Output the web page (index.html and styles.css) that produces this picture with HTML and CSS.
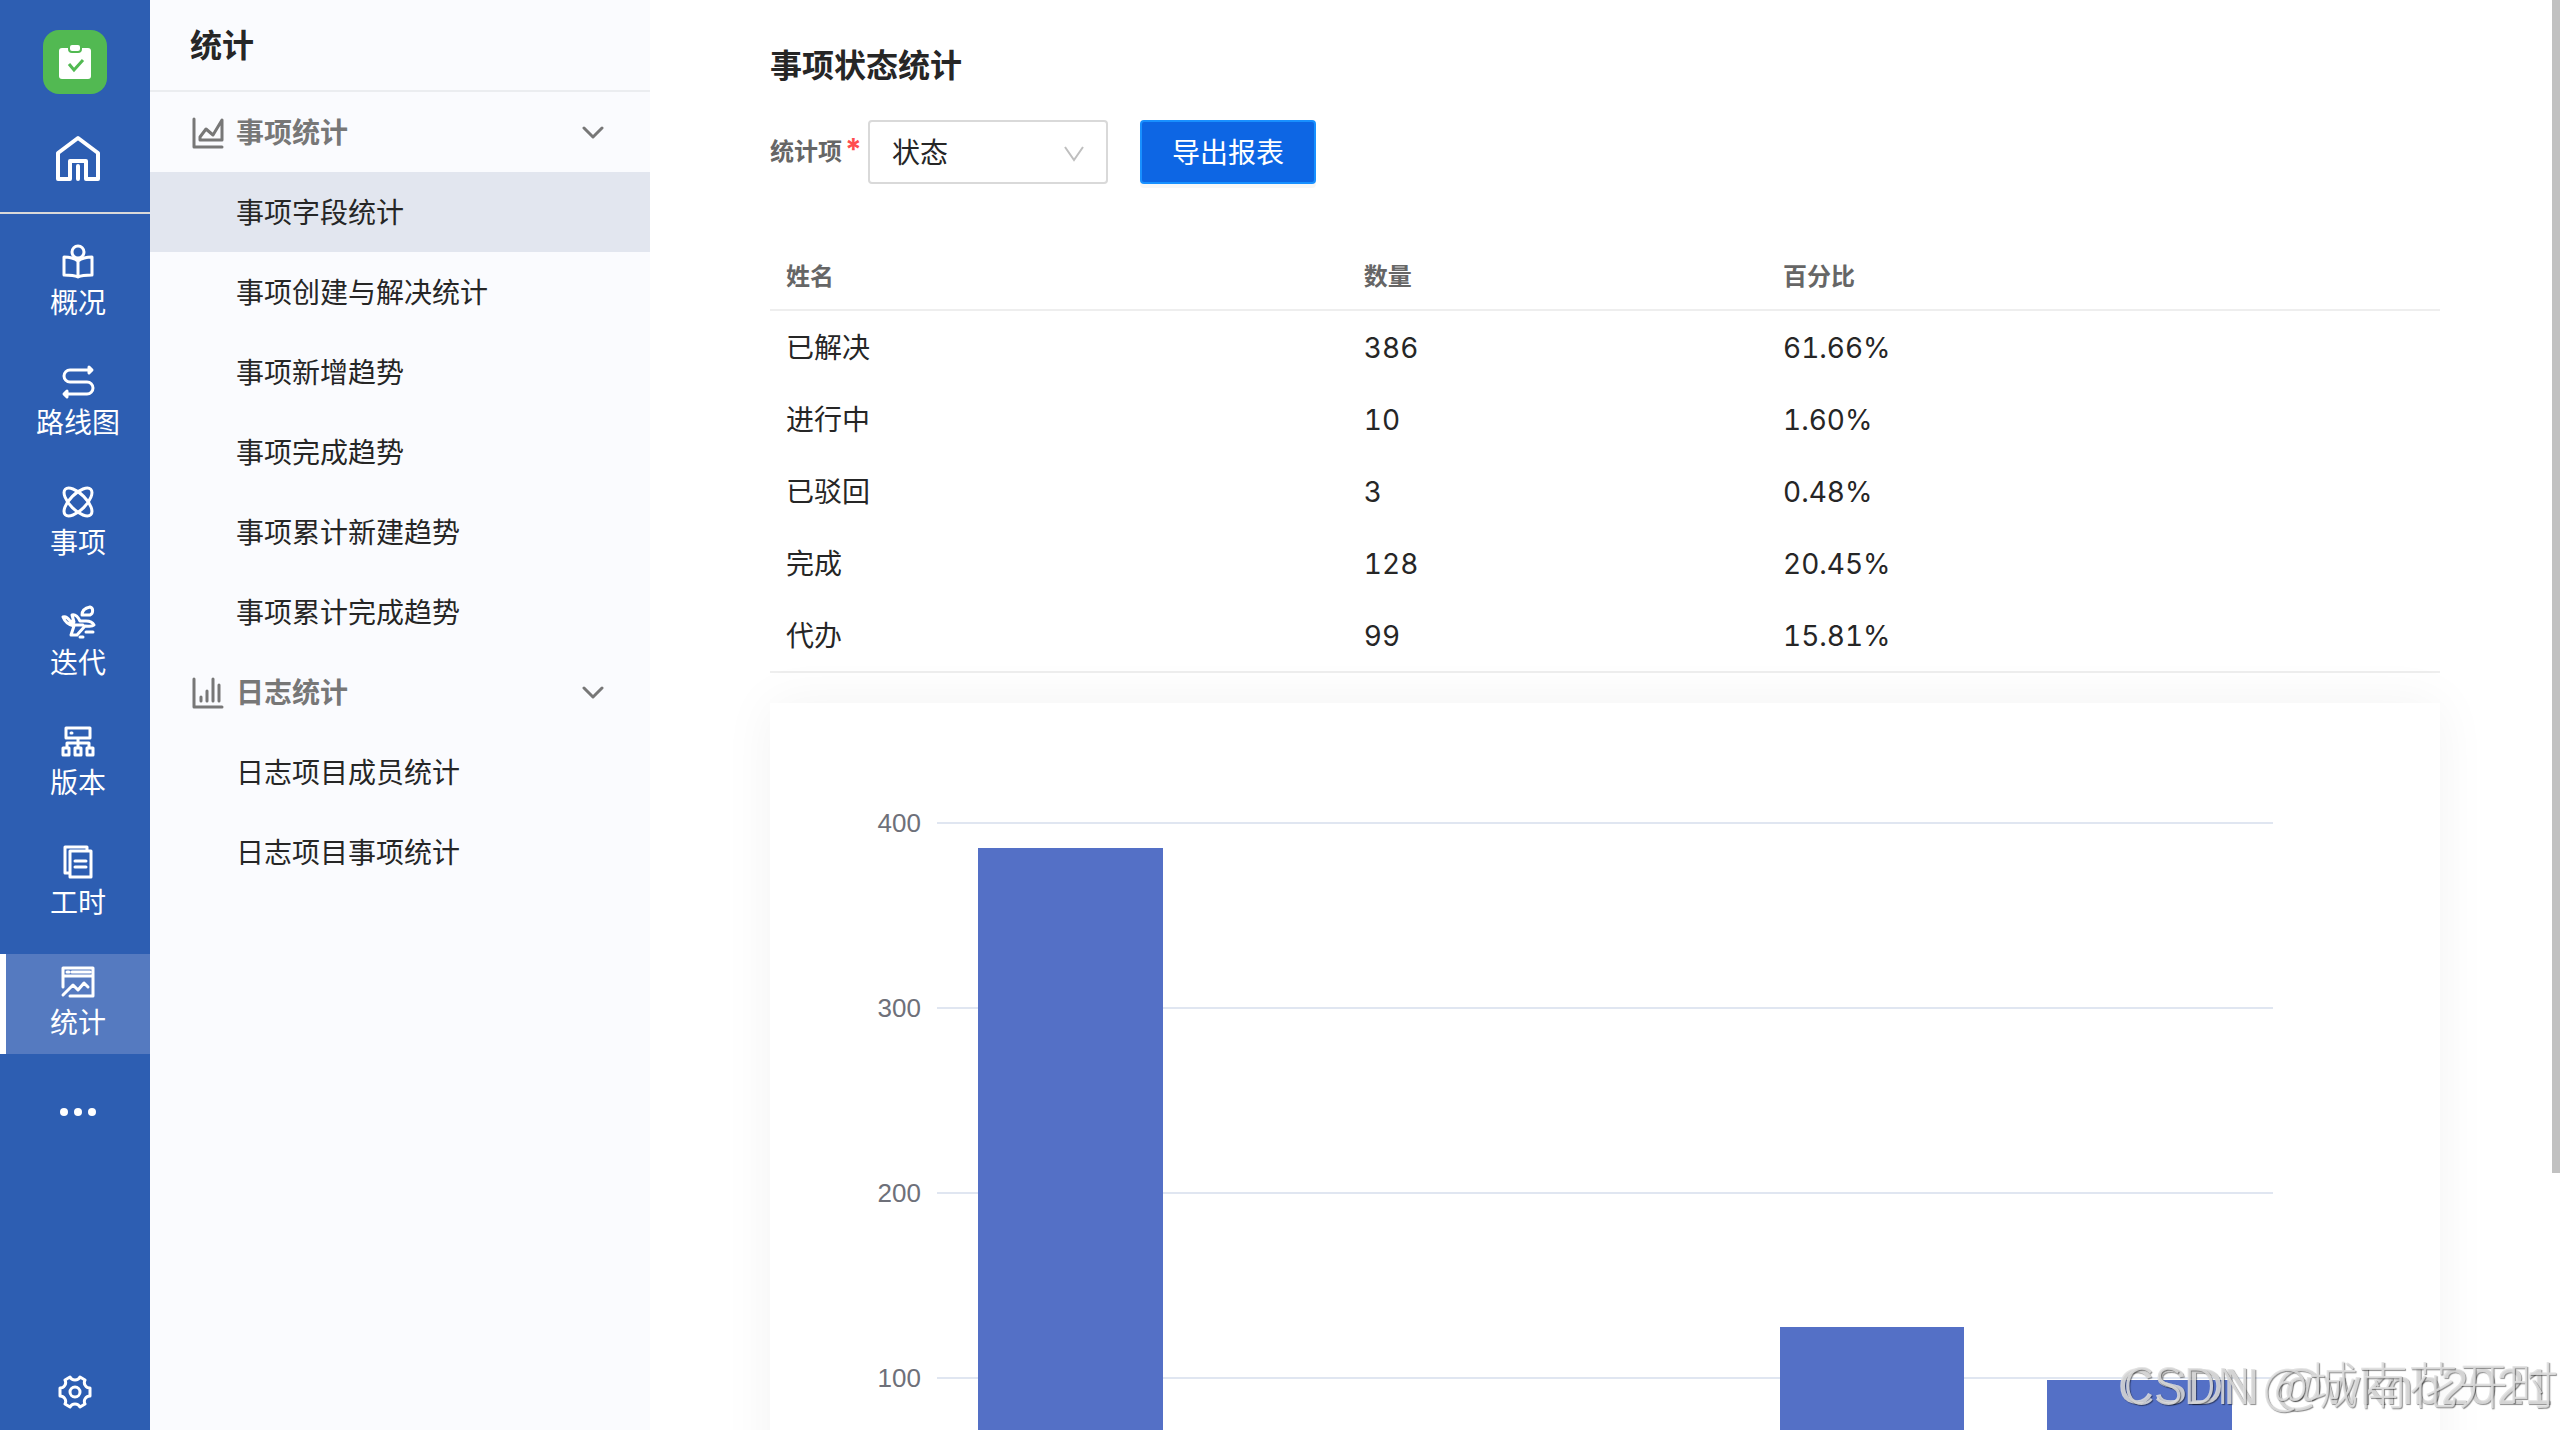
FILE: index.html
```html
<!DOCTYPE html>
<html lang="zh-CN">
<head>
<meta charset="utf-8">
<title>事项状态统计</title>
<link rel="stylesheet" href="styles.css">
</head>
<body>
<div class="app">
  <nav class="rail" aria-label="主导航">
    <a class="logo" href="#" aria-label="项目">
      <svg viewBox="0 0 64 64" width="64" height="64"><rect width="64" height="64" rx="16" fill="#52b952"/><rect x="16" y="18" width="32" height="31" rx="3" fill="#fff"/><rect x="26" y="14" width="12" height="8" rx="3" fill="#fff" stroke="#52b952" stroke-width="2"/><path d="M26 34l5 6 9-10" fill="none" stroke="#52b952" stroke-width="3"/></svg>
    </a>
    <a class="home" href="#" aria-label="首页">
      <svg class="line" viewBox="0 0 48 48" width="48" height="48"><path d="M4 19 24 4l20 15v26H32V27H16v18H4z" stroke-width="4"/><path d="M24 32v13" stroke-width="4"/></svg>
    </a>
    <ul class="rail-list">
      <li><a class="rail-item" href="#"><svg class="line" viewBox="0 0 32 32"><circle cx="16" cy="6" r="6"/><path d="M16 15C12 12 8 11 2 11v18c6 0 10 0 14 2 4-2 8-2 14-2V11c-6 0-10 1-14 4zv15"/></svg><span>概况</span></a></li>
      <li><a class="rail-item" href="#"><svg class="line" viewBox="0 0 32 32"><path d="M29 4H8a6 6 0 0 0 0 12h17a6 6 0 0 1 0 12H3"/><path d="M27 1l3 3-3 3zM5 25l-3 3 3 3z"/></svg><span>路线图</span></a></li>
      <li><a class="rail-item" href="#"><svg class="line" viewBox="0 0 32 32"><ellipse cx="16" cy="16" rx="18" ry="8" transform="rotate(45 16 16)"/><ellipse cx="16" cy="16" rx="18" ry="8" transform="rotate(-45 16 16)"/></svg><span>事项</span></a></li>
      <li><a class="rail-item" href="#"><svg class="line" viewBox="0 0 32 32"><path d="M1 11c3-1 5 1 7 4l4 1-2-7c4-1 6 2 8 6h6c4 0 7 2 8 4-2 2-5 1-9 1l-8 9H9l3-9C6 19 3 16 1 11zM8 16l5 3h8M20 9c0-4 3-7 8-8 4 1 3 7 0 8zM24 26h7M18 31h3"/></svg><span>迭代</span></a></li>
      <li><a class="rail-item" href="#"><svg class="line" viewBox="0 0 32 32"><path d="M4 2h24v10H4zM9 7h1M16 12v9M5 21v-4h22v4M1 22h6v7H1zM13 22h6v7h-6zM25 22h6v7h-6z"/></svg><span>版本</span></a></li>
      <li><a class="rail-item" href="#"><svg class="line" viewBox="0 0 32 32"><path d="M8 5h21v26H8zM8 27H3V1h22v4M13 15h11M13 21h11"/></svg><span>工时</span></a></li>
      <li><a class="rail-item active" href="#" aria-current="page"><svg class="line" viewBox="0 0 32 32"><path d="M1 21V2h30v28H8M1 10h30M5 6h2M10 6h18M1 29l10-10 5 5 6-7 4 4"/></svg><span>统计</span></a></li>
    </ul>
    <button class="more" type="button" aria-label="更多"><svg viewBox="0 0 36 8" width="36" height="8" fill="#fff"><circle cx="4" cy="4" r="4"/><circle cx="18" cy="4" r="4"/><circle cx="32" cy="4" r="4"/></svg></button>
    <button class="settings" type="button" aria-label="设置"><svg class="line" viewBox="0 0 34 34" width="34" height="34"><path d="M12 2c2 4 8 4 10 0l5 3c-2 4 1 8 5 8v8c-4 0-7 4-5 8l-5 3c-2-4-8-4-10 0l-5-3c2-4-1-8-5-8v-8c4 0 7-4 5-8z"/><circle cx="17" cy="17" r="5"/></svg></button>
  </nav>

  <aside class="side">
    <h2 class="side-title">统计</h2>
    <button class="group" type="button" aria-expanded="true">
      <svg class="line" viewBox="0 0 32 32" width="32" height="32"><path d="M2 2v28h28M8 23v-3l6-8 7 6 9-15v20z"/></svg>
      <span>事项统计</span>
      <svg class="line chevron" viewBox="0 0 22 14" width="22" height="14"><path d="M2 2l9 9 9-9"/></svg>
    </button>
    <ul class="menu">
      <li><a class="active" href="#" aria-current="page">事项字段统计</a></li>
      <li><a href="#">事项创建与解决统计</a></li>
      <li><a href="#">事项新增趋势</a></li>
      <li><a href="#">事项完成趋势</a></li>
      <li><a href="#">事项累计新建趋势</a></li>
      <li><a href="#">事项累计完成趋势</a></li>
    </ul>
    <button class="group" type="button" aria-expanded="true">
      <svg class="line" viewBox="0 0 32 32" width="32" height="32"><path d="M2 2v28h28M9 20v4M15 14v10M21 2v22M27 8v16"/></svg>
      <span>日志统计</span>
      <svg class="line chevron" viewBox="0 0 22 14" width="22" height="14"><path d="M2 2l9 9 9-9"/></svg>
    </button>
    <ul class="menu">
      <li><a href="#">日志项目成员统计</a></li>
      <li><a href="#">日志项目事项统计</a></li>
    </ul>
  </aside>

  <main class="main">
    <h1 class="title">事项状态统计</h1>
    <form class="filter">
      <label for="field">统计项<span class="required">*</span></label>
      <div class="select">
        <select id="field"><option>状态</option></select>
        <svg viewBox="0 0 20 16" width="20" height="16"><path d="M1 1l9 13 9-13" fill="none" stroke="#bfbfbf" stroke-width="2"/></svg>
      </div>
      <button class="export" type="button">导出报表</button>
    </form>

    <table class="data">
      <thead><tr><th scope="col">姓名</th><th scope="col">数量</th><th scope="col">百分比</th></tr></thead>
      <tbody>
        <tr><td>已解决</td><td>386</td><td>61.66%</td></tr>
        <tr><td>进行中</td><td>10</td><td>1.60%</td></tr>
        <tr><td>已驳回</td><td>3</td><td>0.48%</td></tr>
        <tr><td>完成</td><td>128</td><td>20.45%</td></tr>
        <tr><td>代办</td><td>99</td><td>15.81%</td></tr>
      </tbody>
    </table>

    <section class="card" aria-label="事项状态柱状图">
      <div class="plot">
        <ol class="ticks">
          <li><span>400</span></li><li><span>300</span></li><li><span>200</span></li><li><span>100</span></li>
        </ol>
        <div class="bars">
          <i style="height:96.5%"></i><i style="height:2.5%"></i><i style="height:0.75%"></i><i style="height:32%"></i><i style="height:24.75%"></i>
        </div>
      </div>
    </section>
  </main>
  <div class="scroll-thumb"></div>
  <div class="mark mark-back">CSDN @wknb2021</div>
  <div class="mark mark-front">CSDN @城南花开时</div>
</div>
</body>
</html>
```
FILE: styles.css
```css
* { box-sizing: border-box; }
body { margin: 0; font: 28px/44px Inter, "Noto Sans CJK SC", sans-serif; color: #262626; background: #fff; }
ul, ol { list-style: none; margin: 0; padding: 0; }
a { color: inherit; text-decoration: none; }
button { font: inherit; color: inherit; background: none; border: 0; padding: 0; cursor: pointer; }
svg { display: block; flex: none; }
.line { fill: none; stroke: currentColor; stroke-width: 3; stroke-linejoin: round; stroke-linecap: round; }

.app { position: relative; display: flex; height: 100vh; overflow: hidden; }

.rail { width: 150px; flex: none; display: flex; flex-direction: column; background: #2d5eb2; color: #fff; }
.logo { align-self: center; margin-top: 30px; }
.home { display: flex; justify-content: center; padding: 40px 0 30px 6px; border-bottom: 2px solid #d9d9d9; }
.rail-list { display: flex; flex-direction: column; gap: 20px; padding-top: 20px; }
.rail-item { display: flex; flex-direction: column; align-items: center; gap: 3px; height: 100px; padding-top: 12px; border-left: 6px solid transparent; }
.rail-item svg { width: 32px; height: 32px; overflow: visible; }
.rail-item.active { background: #557ac0; border-left-color: #fff; }
.more { display: flex; justify-content: center; padding: 54px 0 20px 6px; }
.settings { display: flex; justify-content: center; margin-top: auto; padding: 20px 0 21px; }

.side { width: 500px; flex: none; background: #fafbfe; }
.side-title { margin: 0; padding: 2px 40px 0; font-size: 32px; line-height: 88px; font-weight: 700; border-bottom: 2px solid #ebedf0; }
.group { display: flex; align-items: center; gap: 12px; width: 100%; height: 80px; padding: 1px 46px 0 42px; color: #777; font-weight: 700; }
.chevron { margin-left: auto; }
.menu a { display: block; padding: 2px 86px 0; line-height: 78px; }
.menu a.active { background: #e2e6ef; }

.main { flex: 1; min-width: 0; padding: 42px 120px 0; }
.title { margin: 0; font-size: 32px; line-height: 48px; font-weight: 700; }
.filter { display: flex; align-items: center; margin: 30px 0 60px; }
.filter label { width: 98px; font-size: 24px; font-weight: 700; color: #666; white-space: nowrap; }
.required { color: #ff4d4f; padding-left: 3px; font-size: 30px; line-height: 24px; }
.select { position: relative; width: 240px; }
.select select { appearance: none; width: 100%; height: 64px; padding: 2px 22px 0; font: inherit; color: inherit; background: #fff; border: 2px solid #d9d9d9; border-radius: 4px; }
.select svg { position: absolute; right: 24px; top: 26px; }
.export { width: 176px; height: 64px; padding-top: 2px; margin-left: 32px; color: #fff; background: #0d66e4; border: 2px solid #1890ff; border-radius: 4px; box-shadow: 0 4px 0 rgba(0, 0, 0, .03); }

.data { width: 100%; table-layout: fixed; border-collapse: separate; border-spacing: 0; border-bottom: 2px solid #eee; font-variant-numeric: tabular-nums; }
.data th, .data td { text-align: left; padding: 0 16px; }
.data th { height: 67px; font-size: 24px; color: #666; border-bottom: 2px solid #eee; }
.data th:nth-child(1) { width: 34.6%; }
.data th:nth-child(2) { width: 25.1%; }
.data td { height: 72px; padding-top: 2px; }

.card { margin-top: 30px; padding: 119px 10% 60px; background: #fff; box-shadow: 0 0 50px rgba(0, 0, 0, .05); }
.plot { position: relative; }
.ticks { border-bottom: 2px solid #6e7079; }
.ticks li { height: 185px; border-top: 2px solid #e0e6f1; }
.ticks span { display: block; width: 60px; margin: -17px 0 0 -76px; text-align: right; font: 26px/32px "Liberation Sans", sans-serif; color: #6e7079; }
.bars { position: absolute; inset: 0; display: flex; align-items: flex-end; justify-content: space-around; }
.bars i { width: 13.8%; background: #5470c6; }

.scroll-thumb { position: absolute; top: 0; right: 0; width: 8px; height: 82%; background: #c1c1c1; }
.mark { position: absolute; color: rgba(225, 225, 225, .85); text-shadow: 1px 1px 1px rgba(0, 0, 0, .45); white-space: nowrap; }
.mark-back { right: 8px; bottom: 13px; font: 50px/60px "Liberation Sans", sans-serif; }
.mark-front { right: 2px; bottom: 18px; font: 300 50px/60px "Noto Sans CJK SC", sans-serif; }
```
